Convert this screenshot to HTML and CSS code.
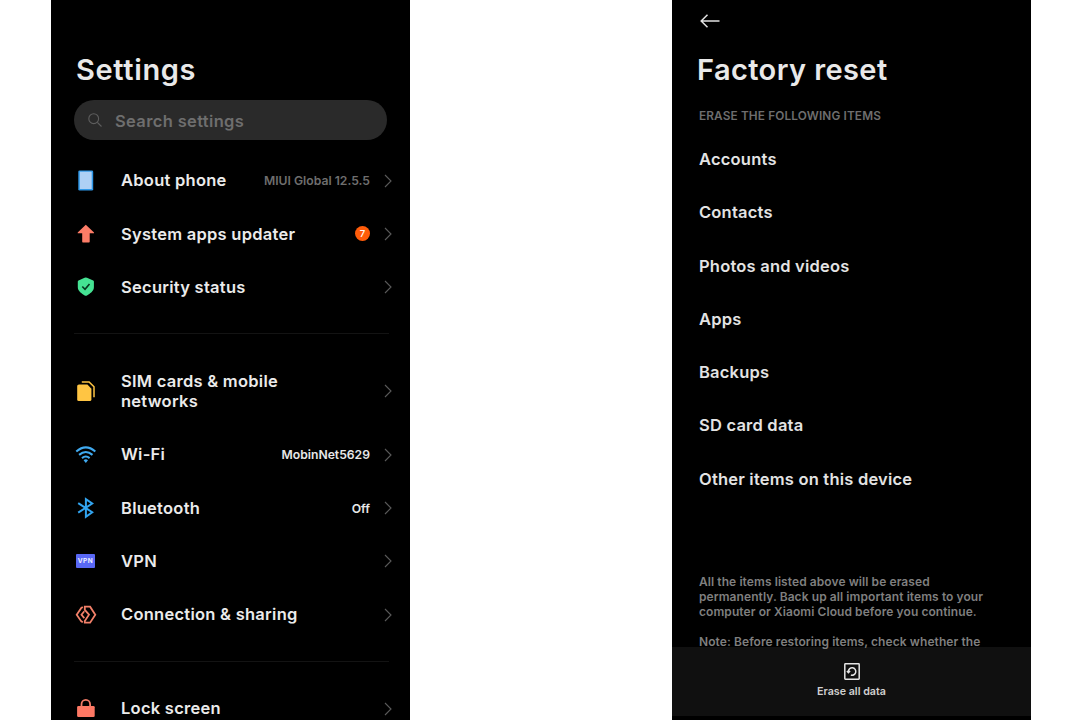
FILE: index.html
```html
<!DOCTYPE html>
<html lang="en">
<head>
<meta charset="utf-8">
<title>Settings</title>
<link rel="stylesheet" href="styles.css">
</head>
<body>
<svg class="defs" width="0" height="0"><symbol id="chev" viewBox="0 0 8 14"><path d="M1 1l6 6-6 6" fill="none" stroke="#5a5a5a" stroke-width="1.1"/></symbol></svg>
<main class="stage">
<section class="phone settings">
  <h1 class="title">Settings</h1>
  <div class="search">
    <svg class="search-icon" viewBox="0 0 14 14"><circle cx="5.7" cy="5.7" r="4.9"/><path d="M9.3 9.3l4.2 4.2"/></svg>
    <span class="t-search">Search settings</span>
  </div>
  <ul class="group">
    <li class="row"><svg class="icon" viewBox="0 0 22 22"><rect x="3.3" y=".4" width="14.900" height="20.200" rx="1.400" fill="#2f98e8"/><rect x="4.800" y="1.700" width="11.900" height="17.300" fill="#aed0f5"/></svg><span class="label">About phone</span><span class="value dim">MIUI Global 12.5.5</span><svg class="chev"><use href="#chev"/></svg></li>
    <li class="row"><svg class="icon" viewBox="0 0 22 22"><path d="M10.800 1.700l8.200 7.700v.9H14.700v8.400q0 .7-.7.7H7.900q-.7 0-.7-.7v-8.400H2.700v-.9z" fill="#fd7c67"/></svg><span class="label">System apps updater</span><span class="badge">7</span><svg class="chev"><use href="#chev"/></svg></li>
    <li class="row"><svg class="icon" viewBox="0 0 22 22"><path d="M10.800 1.500q.6 0 1.200.3l6.200 2.700q.7.3.7 1v5.800c0 4-4 6.400-6.900 8.100q-1.200.6-2.300 0C6.900 17.700 2.800 15.300 2.800 11.300V5.500q0-.7.7-1l6.100-2.700q.6-.3 1.200-.3z" fill="#45e293"/><path d="M7.300 10.500l2.700 2.700 4.500-5.300" fill="none" stroke="#06351e" stroke-width="1.600"/></svg><span class="label">Security status</span><svg class="chev"><use href="#chev"/></svg></li>
  </ul>
  <hr class="divider">
  <ul class="group">
    <li class="row tall"><svg class="icon" viewBox="0 0 22 22"><path d="M4 4.500h8.400l4 4.200v10.800q0 1.500-1.500 1.500H3.700q-1.500 0-1.500-1.500V6q0-1.500 1.800-1.500z" fill="#ffc543"/><path d="M6.800 1.900h7.300l4.900 4.800v10.600" fill="none" stroke="#ffc543" stroke-width="1.500"/></svg><span class="label">SIM cards &amp; mobile<br>networks</span><svg class="chev"><use href="#chev"/></svg></li>
    <li class="row"><svg class="icon" viewBox="0 0 22 22"><g fill="none" stroke="#40aaf0" stroke-width="2.100"><path d="M1.300 7.500q9.500-8.200 19 0"/><path d="M4.100 10.900q6.700-5.800 13.400 0"/><path d="M7 14.100q3.800-3.200 7.600 0"/></g><path d="M8.600 16.200q2.200-1.700 4.400 0l-2.200 2.700z" fill="#40aaf0"/></svg><span class="label">Wi-Fi</span><span class="value net">MobinNet5629</span><svg class="chev"><use href="#chev"/></svg></li>
    <li class="row"><svg class="icon" viewBox="0 0 22 22"><path d="M3.200 6.200l14 9-6.300 4.500V2.200l6.300 4.300-14 9.200" fill="none" stroke="#32a4ef" stroke-width="2"/></svg><span class="label">Bluetooth</span><span class="value off">Off</span><svg class="chev"><use href="#chev"/></svg></li>
    <li class="row"><span class="icon vpn"><span class="vpn-mark">VPN</span></span><span class="label">VPN</span><svg class="chev"><use href="#chev"/></svg></li>
    <li class="row"><svg class="icon" viewBox="0 0 22 22"><g fill="none" stroke="#f28069" stroke-width="1.800"><path d="M7.800 3L6.300 3.900 1.700 10.700l4.600 6.700 1.500.8"/><path d="M9.300 7.300L6.500 10.700l2.800 3.400"/><path d="M9.800 5.900V2.700h5.300l5.200 8-5.200 8H9.800v-1.600l4.200-6.400z"/></g></svg><span class="label">Connection &amp; sharing</span><svg class="chev"><use href="#chev"/></svg></li>
  </ul>
  <hr class="divider">
  <ul class="group">
    <li class="row"><svg class="icon" viewBox="0 0 22 22"><rect x="2.100" y="8" width="17.600" height="11" rx="1.300" fill="#fd7864"/><path d="M6.500 9V6.200a4.300 4.300 0 0 1 8.600 0V9" fill="none" stroke="#f07a66" stroke-width="1.800"/></svg><span class="label">Lock screen</span><svg class="chev"><use href="#chev"/></svg></li>
  </ul>
</section>
<section class="phone reset">
  <svg class="back" viewBox="0 0 20 14"><path d="M19.500 7H1M7.500.8L1.200 7l6.300 6.200"/></svg>
  <h1 class="title">Factory reset</h1>
  <h2 class="caption">ERASE THE FOLLOWING ITEMS</h2>
  <ul class="items">
    <li class="item">Accounts</li><li class="item">Contacts</li><li class="item">Photos and videos</li><li class="item">Apps</li><li class="item">Backups</li><li class="item">SD card data</li><li class="item">Other items on this device</li>
  </ul>
  <div class="notes">
    <p>All the items listed above will be erased<br>permanently. Back up all important items to your<br>computer or Xiaomi Cloud before you continue.</p>
    <p>Note: Before restoring items, check whether the</p>
  </div>
  <footer class="action">
    <svg class="erase" viewBox="0 0 16 17"><rect x=".8" y=".8" width="14.400" height="15.400" rx=".6"/><path d="M4.400 9.500V8.400A3.700 3.700 0 1 1 6.900 12M2.900 8l1.500 1.600L6.100 8"/></svg>
    <span>Erase all data</span>
  </footer>
</section>
</main>
</body>
</html>
```

FILE: styles.css
```css
* { box-sizing: border-box; }
body { margin: 0; background: #fff; font-family: Inter, "Liberation Sans", sans-serif; font-weight: 560; }
.defs { display: none; }
.stage { display: flex; justify-content: space-between; width: 1080px; height: 720px; padding: 0 49px 0 51px; overflow: hidden; }
.phone { display: flex; flex-direction: column; width: 359px; height: 720px; background: #000; color: #ebebeb; overflow: hidden; }
ul { list-style: none; margin: 0; padding: 0; }
.title { margin: 0; font-size: 29px; line-height: 36px; font-weight: 560; letter-spacing: 0.4px; color: #e9e9e9; white-space: nowrap; }
.settings { padding: 52px 17px 0 23px; }
.settings .title { padding-left: 2px; letter-spacing: 0.650px; }
.search { display: flex; flex: none; align-items: center; gap: 13px; width: 313px; height: 40px; margin: 12.400px 0 13.500px; padding-left: 14px; border-radius: 20px; background: #2a2a2a; color: #6e6e6e; font-size: 16.500px; letter-spacing: 0.350px; }
.t-search { padding-top: 1px; }
.search-icon { width: 14px; height: 14px; fill: none; stroke: #5e5e5e; stroke-width: 1.100; }
.group { flex: none; }
.row { display: flex; align-items: center; height: 53.300px; padding-left: 1px; }
.row.tall { height: 73.600px; }
.icon { flex: none; width: 22px; height: 22px; margin-right: 24px; }
.label { flex: 1; font-size: 16.500px; line-height: 20.600px; letter-spacing: 0.260px; white-space: nowrap; }
.value { font-size: 12.200px; letter-spacing: 0; color: #e8e8e8; white-space: nowrap; }
.value.dim { color: #6e6e6e; }
.chev { flex: none; width: 8px; height: 14px; margin-left: 14px; margin-right: 1px; }
.badge { display: flex; align-items: center; justify-content: center; width: 15px; height: 15px; border-radius: 50%; background: #ff5c0a; color: #fff; font-size: 9.500px; font-weight: 500; }
.vpn { display: flex; align-items: center; justify-content: center; }
.vpn-mark { display: flex; flex: none; align-items: center; justify-content: center; width: 19px; height: 14px; margin-right: 1px; border-radius: 1px; background: #5968f5; color: #eef; font-size: 6.500px; font-weight: 700; letter-spacing: 0.5px; }
.divider { flex: none; width: 315px; height: 1px; margin: 19.700px 0 20px; border: 0; background: #131313; }
.reset { padding-top: 14px; }
.back { flex: none; width: 20px; height: 14px; margin-left: 28px; fill: none; stroke: #e2e2e2; stroke-width: 1.500; }
.reset .title { margin-top: 24px; padding-left: 25px; }
.caption { margin: 20px 0 9px 27px; font-size: 11.800px; line-height: 16px; font-weight: 560; letter-spacing: 0.140px; color: #6e6e6e; white-space: nowrap; }
.items { flex: none; padding-left: 27px; }
.item { height: 53.250px; font-size: 16.500px; line-height: 53.250px; letter-spacing: 0.210px; color: #e3e3e3; }
.notes { position: relative; z-index: 1; flex: none; height: 141.500px; padding: 68.200px 0 0 27px; font-size: 12px; letter-spacing: 0.080px; line-height: 15px; color: #7f7f7f; white-space: nowrap; }
.notes p { margin: 0 0 15px; }
.action { display: flex; flex: none; flex-direction: column; align-items: center; height: 69px; margin-top: auto; margin-bottom: 4px; padding-top: 16px; gap: 4.500px; background: #101010; color: #d0d0d0; font-size: 10.700px; line-height: 14px; }
.erase { flex: none; width: 16px; height: 17px; fill: none; stroke: #e5e5e5; stroke-width: 1.500; }
```
